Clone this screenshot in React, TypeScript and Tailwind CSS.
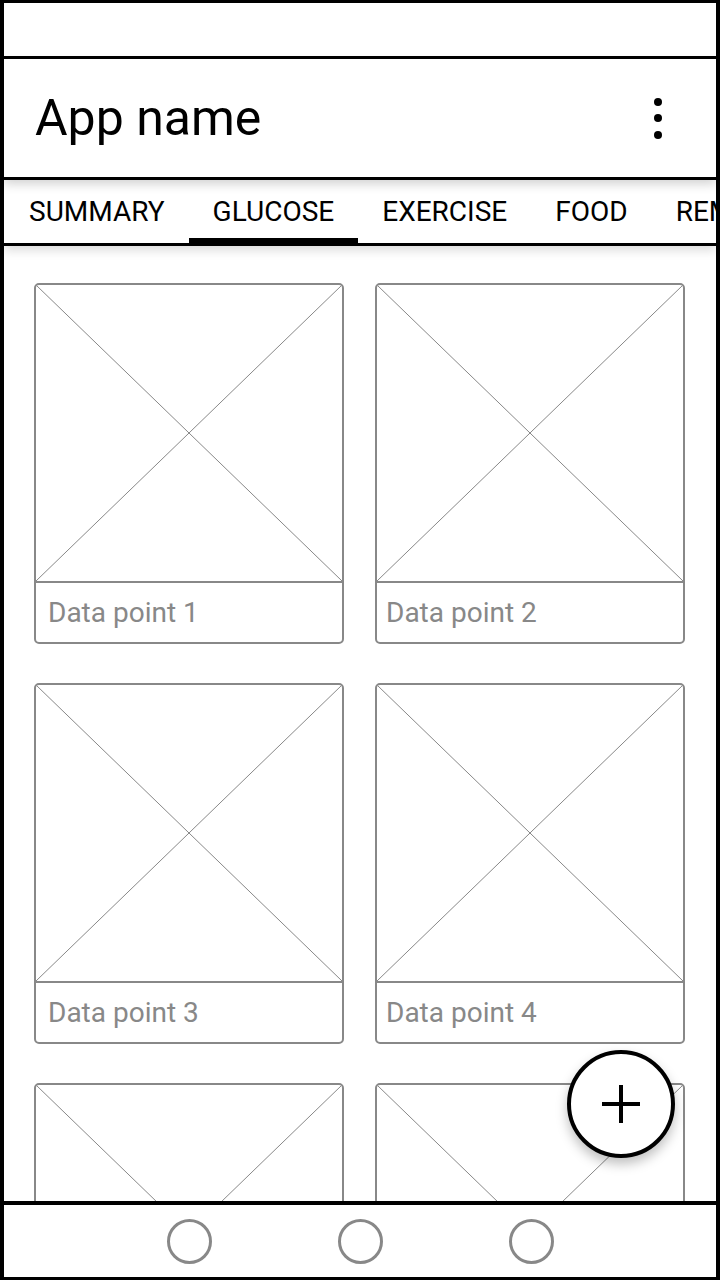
import React from "react";

const font = { fontFamily: "Roboto, 'Noto Sans', Arial, sans-serif" };

function Card({ label, pl }: { label?: string; pl: string }) {
  return (
    <div className="w-[310px] h-[361px] border-2 border-[#888888] rounded-[5px] flex flex-col overflow-hidden bg-white">
      <div className="h-[298px] border-b-2 border-[#888888] shrink-0">
        <svg className="w-full h-full block" viewBox="0 0 100 100" preserveAspectRatio="none">
          <line x1="0" y1="0" x2="100" y2="100" stroke="#888888" strokeWidth="1" vectorEffect="non-scaling-stroke" />
          <line x1="100" y1="0" x2="0" y2="100" stroke="#888888" strokeWidth="1" vectorEffect="non-scaling-stroke" />
        </svg>
      </div>
      <div className={"flex-1 flex items-center text-[28px] leading-none text-[#888888] " + pl}>{label}</div>
    </div>
  );
}

export default function App() {
  const tabs = ["SUMMARY", "GLUCOSE", "EXERCISE", "FOOD", "REMINDERS"];
  return (
    <div style={font} className="w-[720px] h-[1280px] border-x-4 border-y-[3px] border-black bg-white flex flex-col overflow-hidden">
      <div className="h-[53px] shrink-0 border-b-[3px] border-black box-content" />
      <div className="relative z-20 shrink-0 h-[118px] box-content border-b-[3px] border-black bg-white flex items-center justify-between pl-[31px] pr-[54px] shadow-[0_4px_10px_rgba(0,0,0,0.18)]">
        <span className="text-[50px] text-black leading-none">App name</span>
        <div className="flex flex-col items-center gap-[8.5px]">
          <span className="w-[8px] h-[8px] rounded-full bg-black" />
          <span className="w-[8px] h-[8px] rounded-full bg-black" />
          <span className="w-[8px] h-[8px] rounded-full bg-black" />
        </div>
      </div>
      <div className="relative z-10 shrink-0 h-[63px] box-content border-b-[3px] border-black bg-white flex overflow-hidden pl-[1px] shadow-[0_4px_10px_rgba(0,0,0,0.15)]">
        {tabs.map((t) => (
          <div
            key={t}
            className={
              "h-full shrink-0 px-6 pt-[6px] flex items-center whitespace-nowrap text-[28px] leading-none text-black border-b-[5px] " +
              (t === "GLUCOSE" ? "border-black" : "border-transparent")
            }
          >
            {t}
          </div>
        ))}
      </div>
      <div className="relative flex-1 overflow-hidden bg-white">
        <div className="grid grid-cols-[310px_310px] gap-x-[31px] gap-y-[39px] pl-[30px] pt-[37px]">
          <Card label="Data point 1" pl="pl-[12px]" />
          <Card label="Data point 2" pl="pl-[9px]" />
          <Card label="Data point 3" pl="pl-[12px]" />
          <Card label="Data point 4" pl="pl-[9px]" />
          <Card pl="pl-[12px]" />
          <Card pl="pl-[9px]" />
        </div>
        <div className="absolute right-[41px] bottom-[43px] w-[108px] h-[108px] rounded-full border-4 border-black bg-white flex items-center justify-center shadow-[0_6px_12px_rgba(0,0,0,0.25)]">
          <svg width="40" height="40" viewBox="0 0 40 40">
            <line x1="20" y1="1" x2="20" y2="39" stroke="black" strokeWidth="4" />
            <line x1="1" y1="20" x2="39" y2="20" stroke="black" strokeWidth="4" />
          </svg>
        </div>
      </div>
      <div className="shrink-0 h-[72px] box-content border-t-4 border-black bg-white flex items-center justify-center gap-[126px]">
        <span className="w-[45px] h-[45px] rounded-full border-[3px] border-[#888888]" />
        <span className="w-[45px] h-[45px] rounded-full border-[3px] border-[#888888]" />
        <span className="w-[45px] h-[45px] rounded-full border-[3px] border-[#888888]" />
      </div>
    </div>
  );
}
